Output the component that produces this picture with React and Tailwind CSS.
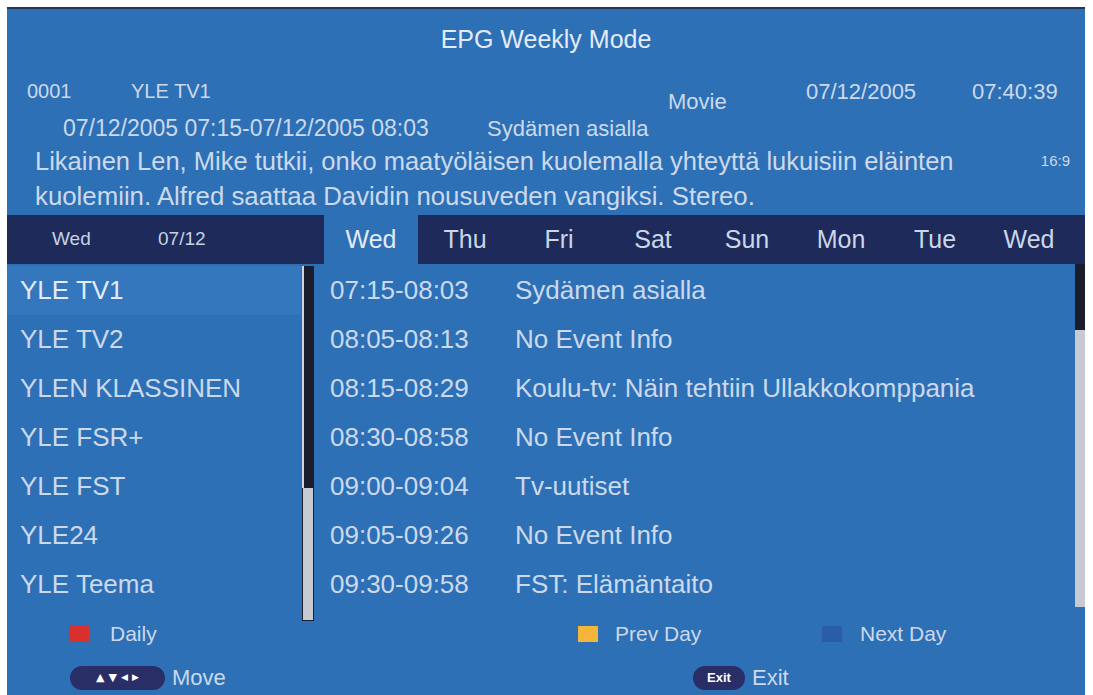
import React from "react";

const channels = [
  "YLE TV1",
  "YLE TV2",
  "YLEN KLASSINEN",
  "YLE FSR+",
  "YLE FST",
  "YLE24",
  "YLE Teema",
];

const events = [
  ["07:15-08:03", "Sydämen asialla"],
  ["08:05-08:13", "No Event Info"],
  ["08:15-08:29", "Koulu-tv: Näin tehtiin Ullakkokomppania"],
  ["08:30-08:58", "No Event Info"],
  ["09:00-09:04", "Tv-uutiset"],
  ["09:05-09:26", "No Event Info"],
  ["09:30-09:58", "FST: Elämäntaito"],
];

const days = ["Thu", "Fri", "Sat", "Sun", "Mon", "Tue", "Wed"];

export default function App() {
  return (
    <div
      className="w-[1093px] h-[695px] bg-white overflow-hidden pt-[7px] pl-[7px]"
      style={{ fontFamily: '"Liberation Sans", Arial, sans-serif' }}
    >
      <div className="w-[1078px] h-[688px] bg-[#2e70b6] border-t-2 border-[#223658] flex flex-col text-[#ccd9eb]">
        {/* Header */}
        <div className="h-[62px] flex items-center justify-center text-[25px] text-[#e3ebf6]">
          EPG Weekly Mode
        </div>
        <div className="h-[40px] flex items-center pl-[20px] text-[20px]">
          <span className="w-[104px]">0001</span>
          <span className="w-[537px]">YLE TV1</span>
          <span className="w-[138px] translate-y-[10px] text-[22px]">Movie</span>
          <span className="w-[166px] text-[22px]">07/12/2005</span>
          <span className="text-[22px]">07:40:39</span>
        </div>
        <div className="h-[34px] flex items-center pl-[56px] text-[23px]">
          <span className="w-[424px]">07/12/2005 07:15-07/12/2005 08:03</span>
          <span className="text-[22px]">Sydämen asialla</span>
        </div>
        <div className="h-[33px] flex items-center pl-[28px] pr-[15px] text-[25.5px]">
          <span className="flex-1 whitespace-nowrap">
            Likainen Len, Mike tutkii, onko maatyöläisen kuolemalla yhteyttä lukuisiin eläinten
          </span>
          <span className="text-[15px]">16:9</span>
        </div>
        <div className="h-[37px] flex items-center pl-[28px] text-[25.8px] whitespace-nowrap">
          kuolemiin. Alfred saattaa Davidin nousuveden vangiksi. Stereo.
        </div>

        {/* Day bar */}
        <div className="h-[49px] flex">
          <div className="w-[317px] bg-[#1e2a5a] flex items-center pl-[45px] text-[19px] text-[#c6d2e4]">
            <span className="w-[106px]">Wed</span>
            <span>07/12</span>
          </div>
          <div className="w-[94px] flex items-center justify-center text-[25px] text-[#e3ebf6]">
            Wed
          </div>
          <div className="flex-1 bg-[#1e2a5a] flex">
            {days.map((d, i) => (
              <div
                key={i}
                className="w-[94px] flex items-center justify-center text-[25px] text-[#cbd7e8]"
              >
                {d}
              </div>
            ))}
          </div>
        </div>

        {/* Body */}
        <div className="h-[357px] flex">
          <div className="w-[294px] flex flex-col pt-[2px]">
            {channels.map((c, i) => (
              <div
                key={c}
                className={
                  "h-[49px] flex items-center pl-[13px] text-[26px] " +
                  (i === 0 ? "bg-[#3577bd] text-[#e3ebf6]" : "")
                }
              >
                {c}
              </div>
            ))}
          </div>
          <div className="w-[14px] pt-[2px] flex flex-col items-center">
            <div className="w-[12px] h-[222px] bg-[#1a1d2c] border-l-2 border-[#cfd6e2]" />
            <div className="w-[12px] h-[133px] bg-[#c6cad3] border-x border-b border-[#1a1d2c]" />
          </div>
          <div className="flex-1 flex flex-col pt-[2px]">
            {events.map(([t, n], i) => (
              <div key={i} className="h-[49px] flex items-center pl-[15px] text-[26px]">
                <span className="w-[185px]">{t}</span>
                <span>{n}</span>
              </div>
            ))}
          </div>
          <div className="w-[10px] flex flex-col">
            <div className="h-[66px] bg-[#1a1d2c]" />
            <div className="h-[277px] bg-[#c6cad3]" />
          </div>
        </div>

        {/* Footer */}
        <div className="h-[26px] flex items-center pl-[62px] text-[21px]">
          <div className="w-[509px] flex items-center">
            <span className="w-[20px] h-[16px] bg-[#d8302c] mr-[21px]" />
            <span>Daily</span>
          </div>
          <div className="w-[244px] flex items-center">
            <span className="w-[20px] h-[16px] bg-[#f4b63a] mr-[17px]" />
            <span>Prev Day</span>
          </div>
          <div className="flex items-center">
            <span className="w-[20px] h-[16px] bg-[#2a5caa] mr-[18px]" />
            <span>Next Day</span>
          </div>
        </div>
        <div className="h-[48px] flex items-start pt-[19px] pl-[63px] text-[22px]">
          <div className="w-[623px] flex items-center">
            <span
              className="w-[95px] h-[24px] rounded-full bg-[#292e66] flex items-center justify-center gap-[4px] text-white text-[11px]"
              style={{ fontFamily: '"DejaVu Sans", sans-serif' }}
            >
              <span>▲</span>
              <span>▼</span>
              <span className="text-[9px]">◀</span>
              <span className="text-[9px]">▶</span>
            </span>
            <span className="ml-[7px] leading-[24px]">Move</span>
          </div>
          <div className="flex items-center">
            <span className="w-[52px] h-[24px] rounded-full bg-[#292e66] flex items-center justify-center text-white text-[13px] font-bold">
              Exit
            </span>
            <span className="ml-[7px] leading-[24px]">Exit</span>
          </div>
        </div>
      </div>
    </div>
  );
}
